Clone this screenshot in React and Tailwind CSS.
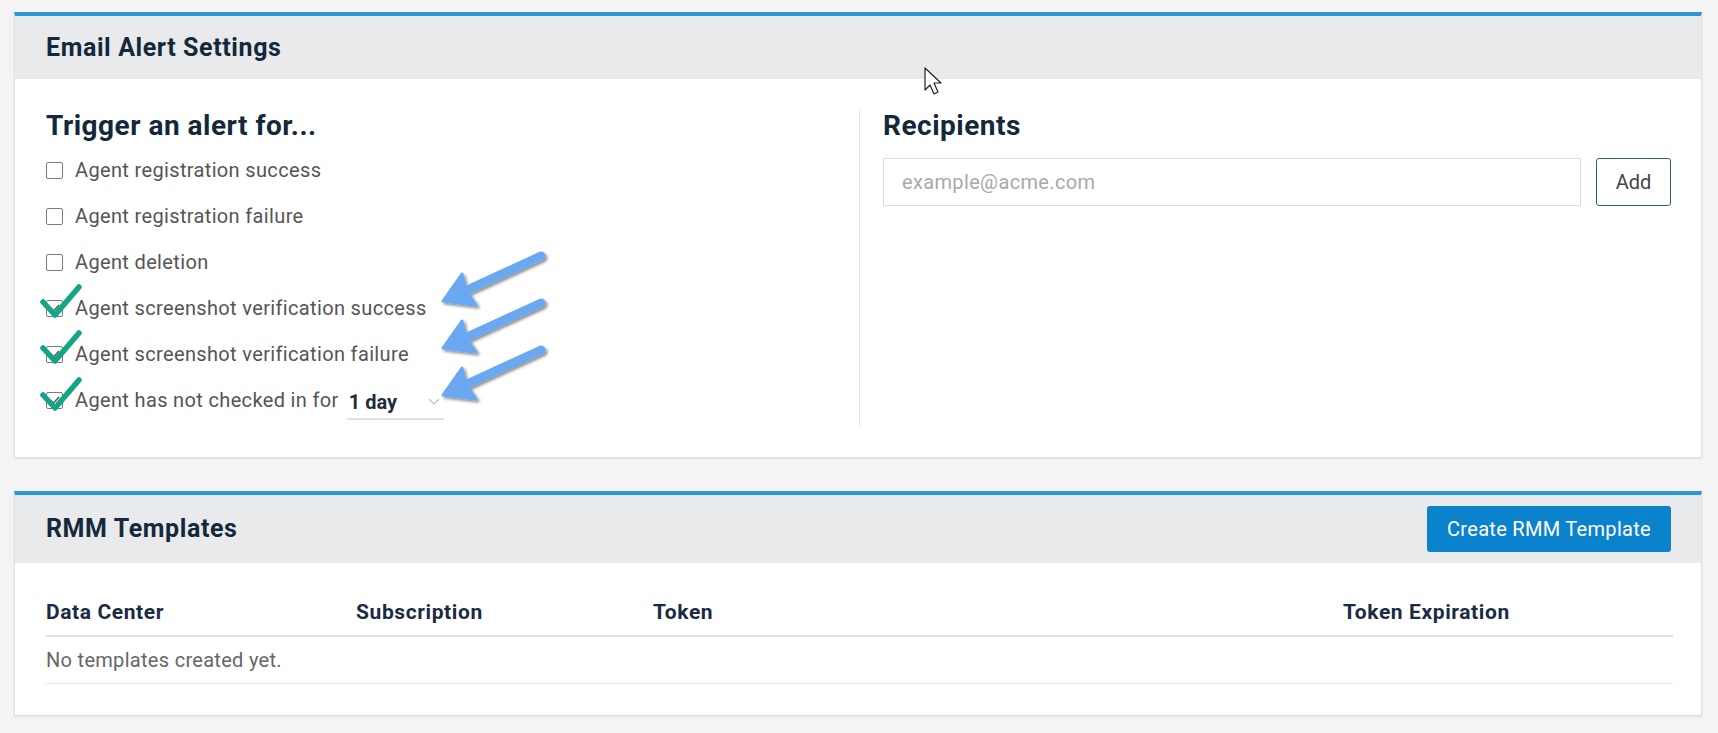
import React from 'react';

const alerts = [
    { label: 'Agent registration success', checked: false },
    { label: 'Agent registration failure', checked: false },
    { label: 'Agent deletion', checked: false },
    { label: 'Agent screenshot verification success', checked: true },
    { label: 'Agent screenshot verification failure', checked: true },
];

const Checkbox = ({ checked }) => (
    <span className="w-[17px] h-[17px] shrink-0 border border-[#7a7a7a] rounded-[2px] bg-white flex items-center justify-center">
        {checked && (
            <svg width="12" height="12" viewBox="0 0 12 12">
                <path d="M2 6.5l2.5 2.5L10 3" fill="none" stroke="#555" strokeWidth="1.5" />
            </svg>
        )}
    </span>
);

// annotation marks drawn over the screenshot
const Annotations = () => (
    <svg className="absolute left-0 top-0 pointer-events-none" width="1718" height="733">
        <defs>
            <filter id="shadow" x="-20%" y="-20%" width="140%" height="140%">
                <feDropShadow dx="2" dy="2" stdDeviation="1.5" floodColor="#000" floodOpacity="0.45" />
            </filter>
        </defs>
        {[0, 47, 94].map((dy) => (
            <g key={dy} filter="url(#shadow)" transform={`translate(0 ${dy})`}>
                <path d="M541 256 L454 296" stroke="#6aa9f2" strokeWidth="9" strokeLinecap="round" fill="none" />
                <path d="M443 301 L462 274 L466 291 L476 305 Z" fill="#6aa9f2" stroke="#6aa9f2" strokeWidth="3" strokeLinejoin="round" />
            </g>
        ))}
        {[0, 46, 93].map((dy) => (
            <path
                key={dy}
                transform={`translate(0 ${dy})`}
                d="M43 302 L55 315 L79 287"
                stroke="#13a585"
                strokeWidth="5.5"
                strokeLinecap="round"
                strokeLinejoin="round"
                fill="none"
            />
        ))}
        <path
            d="M925 68 L925 90 L930 85 L934 94 L938 92 L934 83 L941 83 Z"
            fill="#fff"
            stroke="#222"
            strokeWidth="1.2"
            strokeLinejoin="round"
        />
    </svg>
);

const App = () => {
    return (
        <div
            className="relative min-h-screen bg-[#f4f4f5] pt-[12px] pl-[14px]"
            style={{ fontFamily: 'Roboto, "Liberation Sans", sans-serif' }}
        >
            <div className="w-[1688px] bg-white border-t-4 border-[#2e98d6] border-x border-b border-x-[#e1e1e1] border-b-[#dedede] shadow-[0_1px_2px_rgba(0,0,0,0.08)]">
                <div className="h-[63px] bg-[#e9eaec] flex items-center px-[31px]">
                    <h2 className="text-[25px] font-bold tracking-[0.6px] text-[#14283b]">Email Alert Settings</h2>
                </div>
                <div className="flex pl-[31px] pr-[30px] pt-[31px] pb-[30px]">
                    <div className="w-[813px]">
                        <h3 className="text-[28px] leading-[32px] font-bold tracking-[0.5px] text-[#14283b]">Trigger an alert for...</h3>
                        <div className="mt-[5px]">
                            {alerts.map((a) => (
                                <label key={a.label} className="h-[46px] flex items-center gap-[12px]">
                                    <Checkbox checked={a.checked} />
                                    <span className="text-[20px] tracking-[0.35px] text-[#555]">{a.label}</span>
                                </label>
                            ))}
                            <div className="h-[46px] flex items-center gap-[12px]">
                                <Checkbox checked />
                                <span className="text-[20px] tracking-[0.35px] text-[#555]">Agent has not checked in for</span>
                                <div className="w-[97px] h-[34px] -ml-[4px] border-b-2 border-[#e2e2e2] flex items-center justify-between pl-[2px] pr-[4px] mt-[6px]">
                                    <span className="text-[20px] font-bold text-[#1d2d3e]">1 day</span>
                                    <svg width="12" height="8" viewBox="0 0 12 8">
                                        <path d="M1 1l5 5 5-5" fill="none" stroke="#c8c8c8" strokeWidth="1.5" />
                                    </svg>
                                </div>
                            </div>
                        </div>
                    </div>
                    <div className="flex-1 border-l border-[#e4e4e4] pl-[23px] h-[317px]">
                        <h3 className="text-[28px] leading-[32px] font-bold tracking-[0.5px] text-[#14283b]">Recipients</h3>
                        <div className="mt-[16px] flex gap-[15px]">
                            <input
                                placeholder="example@acme.com"
                                className="flex-1 h-[48px] border border-[#dcdcdc] px-[18px] text-[20px] tracking-[0.35px] text-[#444] placeholder:text-[#a9a9a9] outline-none"
                            />
                            <button className="w-[75px] h-[48px] border border-[#2f5e74] rounded-[3px] text-[20px] text-[#444] bg-white">
                                Add
                            </button>
                        </div>
                    </div>
                </div>
            </div>

            <div className="mt-[33px] w-[1688px] bg-white border-t-4 border-[#2e98d6] border-x border-b border-x-[#e1e1e1] border-b-[#dedede] shadow-[0_1px_2px_rgba(0,0,0,0.08)]">
                <div className="h-[68px] bg-[#e9eaec] flex items-center justify-between pl-[31px] pr-[30px]">
                    <h2 className="text-[25px] font-bold tracking-[0.6px] text-[#14283b]">RMM Templates</h2>
                    <button className="w-[244px] h-[46px] bg-[#0b82cc] rounded-[3px] text-white text-[20px] tracking-[0.3px]">
                        Create RMM Template
                    </button>
                </div>
                <div className="pl-[31px] pr-[28px] pt-[30px] pb-[31px]">
                    <div className="grid grid-cols-[310px_297px_690px_1fr] h-[44px] pb-[2px] items-center border-b-2 border-[#e0e0e0] text-[21px] font-bold text-[#1b2a45] tracking-[0.6px]">
                        <span>Data Center</span>
                        <span>Subscription</span>
                        <span>Token</span>
                        <span>Token Expiration</span>
                    </div>
                    <div className="h-[47px] flex items-center border-b border-[#e6e6e6] text-[20px] tracking-[0.3px] text-[#666]">
                        No templates created yet.
                    </div>
                </div>
            </div>

            <Annotations />
        </div>
    );
};

export default App;
